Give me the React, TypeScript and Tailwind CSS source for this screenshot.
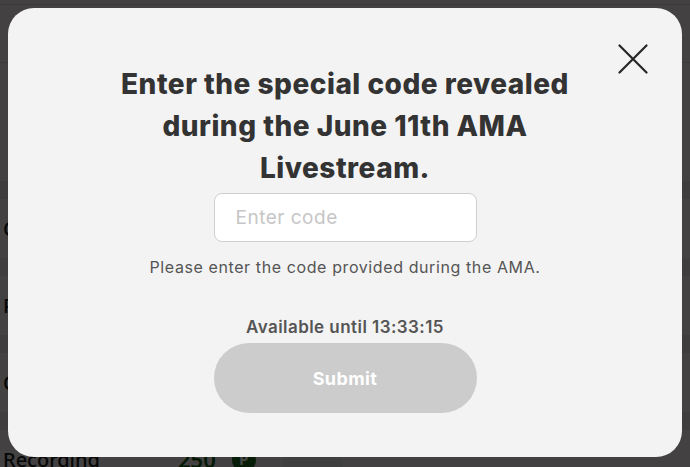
import React from "react";

const rows = [
  { label: "Channel", value: "120" },
  { label: "Photo", value: "80" },
  { label: "Clip", value: "150" },
  { label: "Recording", value: "250" },
];

export default function App() {
  return (
    <div className="relative w-[690px] h-[467px] overflow-hidden bg-[#efeaea]" style={{ fontFamily: "Inter, 'Noto Sans', sans-serif" }}>
      {/* background page */}
      <div className="flex flex-col">
        <div className="h-[5px] border-b border-[#d8d2d2]" />
        <div className="h-[58px] border-b border-[#d8d2d2]" />
        <div className="h-[118px]" />
        {rows.map((r) => (
          <div key={r.label} className="flex flex-col">
            <div className="h-[18px] bg-[#e2dcdc]" />
            <div className="h-[59px] flex items-center pl-[3px] text-[20px] text-[#1a1a1a] font-medium" style={{ fontFamily: "'Noto Sans', sans-serif" }}>
              <span className="w-[175px]">{r.label}</span>
              <span className="text-[#0f5a10] font-semibold text-[22px]">{r.value}</span>
              <span className="ml-[16px] w-[24px] h-[24px] rounded-full bg-[#1b6a1b] text-white text-[15px] font-bold flex items-center justify-center">P</span>
              <span className="ml-[27px] h-full w-[60px] bg-[#e6e0e0]" />
            </div>
          </div>
        ))}
      </div>

      {/* overlay */}
      <div className="absolute inset-0 bg-black/[0.72]" />

      {/* modal */}
      <div className="absolute left-[8px] top-[8px] w-[674px] h-[449px] rounded-[26px] bg-[#f3f3f3] flex flex-col items-center" style={{ fontFamily: "Inter, 'Noto Sans', sans-serif" }}>
        <button className="absolute right-[34px] top-[36px] w-[30px] h-[30px] flex items-center justify-center">
          <svg width="30" height="30" viewBox="0 0 30 30" fill="none" stroke="#262626" strokeWidth="2.2" strokeLinecap="round">
            <path d="M1.5 1.5 L28.5 28.5 M28.5 1.5 L1.5 28.5" />
          </svg>
        </button>
        <h1 className="mt-[55px] w-[500px] text-center text-[28px] leading-[42px] font-extrabold text-[#333333] tracking-[0.5px]">
          Enter the special code revealed during the June 11th AMA Livestream.
        </h1>
        <input
          placeholder="Enter code"
          className="mt-[4px] w-[263px] h-[49px] rounded-[8px] border border-[#cfcfcf] bg-white px-[21px] text-[19px] tracking-[0.5px] text-[#333] placeholder:text-[#c6c6c6] outline-none"
        />
        <p className="mt-[15px] text-[16px] leading-[20px] tracking-[0.6px] text-[#555]">Please enter the code provided during the AMA.</p>
        <p className="mt-[40px] text-[17px] leading-[20px] tracking-[0.45px] font-semibold text-[#555]">Available until 13:33:15</p>
        <button className="mt-[6px] w-[263px] h-[70px] rounded-full bg-[#cccccc] text-white text-[18px] tracking-[0.4px] font-bold">Submit</button>
      </div>
    </div>
  );
}
